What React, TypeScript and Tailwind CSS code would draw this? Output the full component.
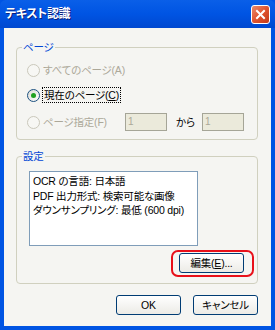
import React from 'react'

const font = "font-['Liberation_Sans','Noto_Sans_CJK_JP',sans-serif] [font-feature-settings:'palt']"

function Radio({ checked = false, disabled = false }: { checked?: boolean; disabled?: boolean }) {
  return (
    <span
      className={`w-[13px] h-[13px] rounded-full border flex items-center justify-center shrink-0 ${
        disabled ? 'border-[#cac8bb] bg-[#f7f7f4]' : 'border-[#1c5180] bg-gradient-to-br from-[#dcdcd6] to-white'
      }`}
    >
      {checked && <span className="w-[5px] h-[5px] rounded-full bg-[#21a121]" />}
    </span>
  )
}

function Group({ label, className, children }: { label: string; className: string; children: React.ReactNode }) {
  return (
    <div className={`relative border border-[#d0d0bf] rounded-[4px] ${className}`}>
      <span className="absolute -top-[8px] left-[5px] px-[1px] bg-[#f5f5f2] text-[#0046d5] leading-[14px]">
        {label}
      </span>
      {children}
    </div>
  )
}

function XpButton({ children, className = '' }: { children: React.ReactNode; className?: string }) {
  return (
    <button
      className={`w-[65px] h-[20px] rounded-[3px] border border-[#003c74] bg-gradient-to-b from-white to-[#ecebe6] leading-none text-black flex items-center justify-center ${className}`}
    >
      {children}
    </button>
  )
}

export default function App() {
  return (
    <div className={`w-[275px] h-[330px] bg-[#0054e3] flex flex-col ${font}`}>
      {/* タイトルバー */}
      <div className="h-[28px] shrink-0 flex items-center justify-between pl-[5px] pr-[5px] bg-gradient-to-b from-[#0a5fe8] via-[#0054e3] to-[#0048d0] rounded-t-[6px]">
        <span className="text-white font-bold text-[12px] tracking-[-0.3px] [text-shadow:1px_1px_0_#0a1e7a]">テキスト認識</span>
        <span className="w-[19px] h-[19px] rounded-[3px] border border-white bg-gradient-to-br from-[#e88a6c] via-[#e0532e] to-[#c33a1a] flex items-center justify-center">
          <svg width="11" height="11" viewBox="0 0 11 11">
            <path d="M2 2 L9 9 M9 2 L2 9" stroke="white" strokeWidth="2" strokeLinecap="square" />
          </svg>
        </span>
      </div>

      <div className="flex-1 mx-[4px] mb-[4px] bg-[#f5f5f2] flex flex-col pl-[12px] pr-[13px] pt-[19px] text-[10.5px] tracking-[-0.2px] leading-[14px]">
        <Group label="ページ" className="h-[93px] flex flex-col pl-[10px]">
          <div className="h-[20px] mt-[12px] flex items-center gap-[3px] text-[#aca899]">
            <Radio disabled />
            <span>すべてのページ(A)</span>
          </div>
          <div className="h-[20px] mt-[5px] flex items-center gap-[2px]">
            <Radio checked />
            <span className="border border-dotted border-black px-[1px]">
              現在のページ(<span className="underline">C</span>)
            </span>
          </div>
          <div className="h-[20px] mt-[7px] flex items-center text-[#aca899]">
            <Radio disabled />
            <span className="ml-[3px] w-[82px]">ページ指定(F)</span>
            <div className="w-[42px] h-[18px] border border-[#a5a597] bg-[#ebeadb] text-[#aca899] text-[10px] pl-[2px] leading-[16px]">1</div>
            <span className="ml-[9px] w-[26px] text-black">から</span>
            <div className="w-[42px] h-[18px] border border-[#a5a597] bg-[#ebeadb] text-[#aca899] text-[10px] pl-[2px] leading-[16px]">1</div>
          </div>
        </Group>

        <Group label="設定" className="mt-[16px] h-[128px] flex flex-col pl-[12px] pr-[13px]">
          <div className="mt-[14px] w-[169px] h-[75px] border border-[#7f9db9] bg-white px-[3px] pt-[2px] leading-[14.5px] whitespace-nowrap">
            <div>OCR の言語: 日本語</div>
            <div>PDF 出力形式: 検索可能な画像</div>
            <div>ダウンサンプリング: 最低 (600 dpi)</div>
          </div>
          <div className="mt-[7px] flex justify-end">
            <div className="relative">
              <XpButton>
                編集(<span className="underline">E</span>)...
              </XpButton>
              <span className="absolute -left-[8px] -top-[3px] w-[83px] h-[27px] border-2 border-[#e8101a] rounded-[7px]" />
            </div>
          </div>
        </Group>

        <div className="mt-[11px] flex justify-end gap-[12px]">
          <XpButton>OK</XpButton>
          <XpButton>キャンセル</XpButton>
        </div>
      </div>
    </div>
  )
}
